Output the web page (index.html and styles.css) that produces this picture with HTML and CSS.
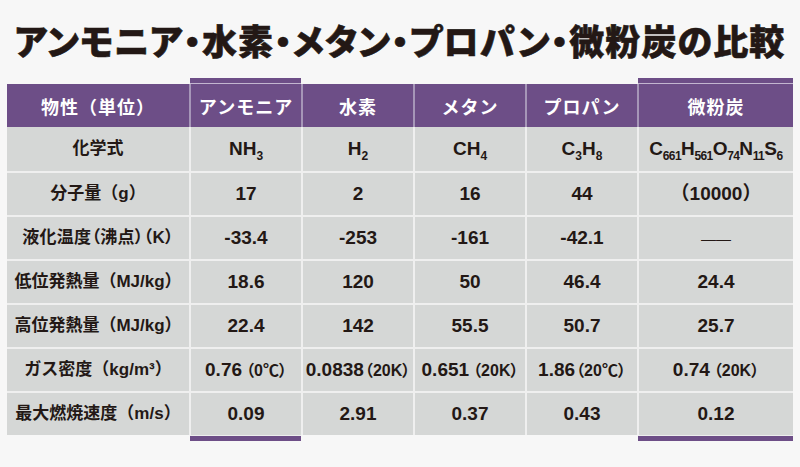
FILE: index.html
```html
<!DOCTYPE html>
<html lang="ja">
<head>
<meta charset="utf-8">
<title>アンモニア・水素・メタン・プロパン・微粉炭の比較</title>
<link rel="stylesheet" href="styles.css">
</head>
<body>
<h1 class="title">アンモニア・水素・メタン・プロパン・微粉炭の比較</h1>
<div class="table">
  <div class="row cap-row">
    <div class="cap"></div><div class="cap hl-top"></div><div class="cap"></div><div class="cap"></div><div class="cap"></div><div class="cap hl-top"></div>
  </div>
  <div class="row head">
    <div class="th">物性（単位）</div>
    <div class="th">アンモニア</div>
    <div class="th">水素</div>
    <div class="th">メタン</div>
    <div class="th">プロパン</div>
    <div class="th">微粉炭</div>
  </div>
  <div class="row body">
    <div class="label">化学式</div>
    <div class="val">NH<sub>3</sub></div>
    <div class="val">H<sub>2</sub></div>
    <div class="val">CH<sub>4</sub></div>
    <div class="val">C<sub>3</sub>H<sub>8</sub></div>
    <div class="val formula">C<sub>661</sub>H<sub>561</sub>O<sub>74</sub>N<sub>11</sub>S<sub>6</sub></div>
  </div>
  <div class="row body">
    <div class="label">分子量（g）</div>
    <div class="val">17</div>
    <div class="val">2</div>
    <div class="val">16</div>
    <div class="val">44</div>
    <div class="val paren">（10000）</div>
  </div>
  <div class="row body">
    <div class="label tight">液化温度（沸点）（K）</div>
    <div class="val">-33.4</div>
    <div class="val">-253</div>
    <div class="val">-161</div>
    <div class="val">-42.1</div>
    <div class="val"><span class="dash">——</span></div>
  </div>
  <div class="row body">
    <div class="label">低位発熱量（MJ/kg）</div>
    <div class="val">18.6</div>
    <div class="val">120</div>
    <div class="val">50</div>
    <div class="val">46.4</div>
    <div class="val">24.4</div>
  </div>
  <div class="row body">
    <div class="label">高位発熱量（MJ/kg）</div>
    <div class="val">22.4</div>
    <div class="val">142</div>
    <div class="val">55.5</div>
    <div class="val">50.7</div>
    <div class="val">25.7</div>
  </div>
  <div class="row body">
    <div class="label">ガス密度（kg/m³）</div>
    <div class="val">0.76<span class="note gap">（0℃）</span></div>
    <div class="val">0.0838<span class="note">（20K）</span></div>
    <div class="val">0.651<span class="note gap">（20K）</span></div>
    <div class="val">1.86<span class="note">（20℃）</span></div>
    <div class="val">0.74<span class="note gap">（20K）</span></div>
  </div>
  <div class="row body">
    <div class="label">最大燃焼速度（m/s）</div>
    <div class="val">0.09</div>
    <div class="val">2.91</div>
    <div class="val">0.37</div>
    <div class="val">0.43</div>
    <div class="val">0.12</div>
  </div>
  <div class="row cap-row">
    <div class="cap"></div><div class="cap hl-bottom"></div><div class="cap"></div><div class="cap"></div><div class="cap"></div><div class="cap hl-bottom"></div>
  </div>
</div>
</body>
</html>
```

FILE: styles.css
```css
html, body {
  margin: 0;
  padding: 0;
  background: #f7f7f7;
}

body {
  width: 800px;
  height: 467px;
  overflow: hidden;
  color: #231815;
  font-family: "Liberation Sans", "Noto Sans CJK JP", sans-serif;
}

.title {
  margin: 0;
  padding-top: 3px;
  height: 75px;
  line-height: 74px;
  text-align: center;
  font-family: "Noto Sans CJK JP", sans-serif;
  font-weight: 900;
  font-size: 35px;
  font-feature-settings: "palt";
  letter-spacing: 1.1px;
  -webkit-text-stroke: 0.6px #231815;
  color: #231815;
}

.table {
  margin-left: 7px;
  display: grid;
  grid-template-columns: 182px 112px 112px 112px 112px 156px;
  grid-template-rows: 6px 43px repeat(7, 44px) 6px;
  width: 786px;
}

.row {
  display: contents;
}

.cap {
  box-sizing: border-box;
}

.hl-top {
  background: #6d4e87;
  border-bottom: 1px solid #c3b6d0;
  margin-left: 1px;
}

.hl-bottom {
  background: #6d4e87;
  border-top: 1px solid #eeeeee;
  margin-left: 1px;
}

.th, .label, .val {
  box-sizing: border-box;
  display: block;
  text-align: center;
  font-weight: 700;
  white-space: nowrap;
}

.th {
  background: #6d4e87;
  color: #ffffff;
  font-family: "Noto Sans CJK JP", sans-serif;
  font-size: 18px;
  letter-spacing: 1px;
  line-height: 43px;
  padding-top: 1px;
}

.th + .th {
  border-left: 2px solid #a696b8;
}

.label, .val {
  background: #d5d7d6;
  line-height: 42px;
}

.head + .body > div {
  padding-top: 1px;
}

.label {
  font-size: 17px;
}

.label.tight {
  font-feature-settings: "palt";
  letter-spacing: 0.3px;
}

.val {
  font-size: 19px;
  border-left: 2px solid #efefef;
}

.body + .body > div {
  border-top: 2px solid #efefef;
}

sub {
  font-size: 12px;
  line-height: 0;
  vertical-align: -5px;
}

.formula {
  letter-spacing: -0.3px;
}

.formula sub {
  letter-spacing: -0.6px;
}

.note {
  font-size: 16px;
  font-feature-settings: "palt";
  margin-left: 1px;
}

.note.gap {
  margin-left: 4px;
}

.dash {
  font-weight: 400;
  font-size: 15px;
  letter-spacing: 0;
}
```
